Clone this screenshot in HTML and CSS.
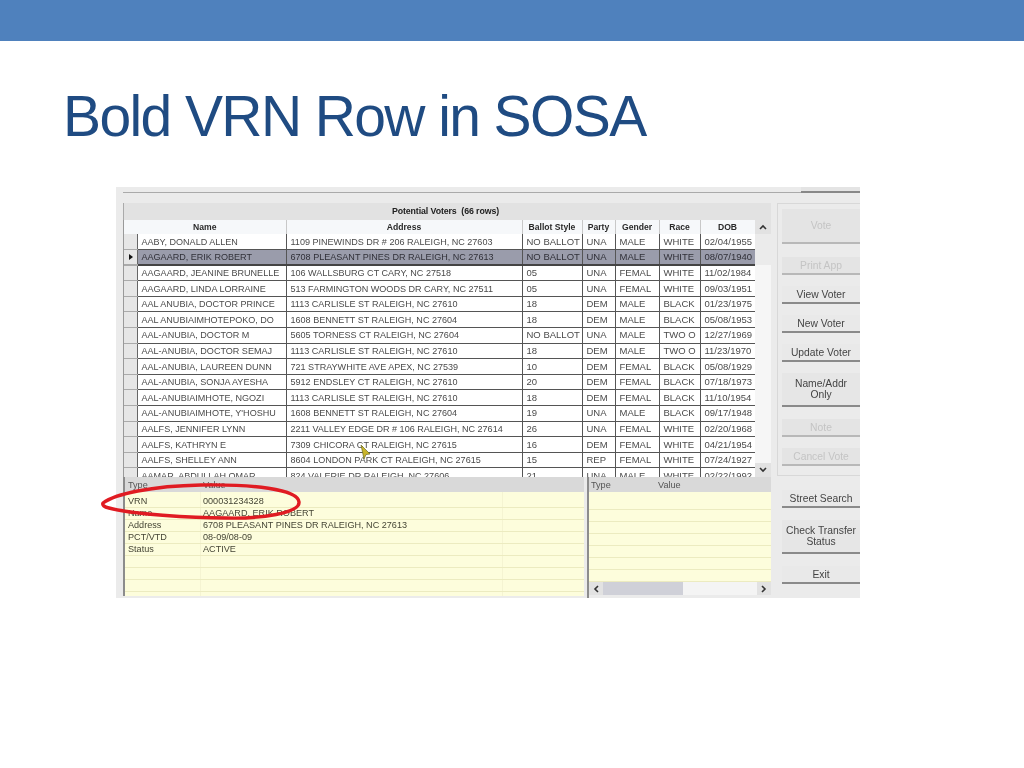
FILE: index.html
```html
<!DOCTYPE html>
<html lang="en">
<head>
<meta charset="utf-8">
<title>Bold VRN Row in SOSA</title>
<link rel="stylesheet" href="styles.css">
</head>
<body>
<div class="topbar"></div>
<h1 class="title">Bold VRN Row in SOSA</h1>
<div class="stage">
  <div class="shot">
    <div class="tabstrip"><span class="tabbtn"></span></div>
    <div class="app">
      <div class="main">
        <div class="gridtitle">Potential Voters &nbsp;(66 rows)</div>
        <div class="gridwrap">
          <div class="tablebox">
            <table class="voters">
              <colgroup><col class="c0"><col class="c1"><col class="c2"><col class="c3"><col class="c4"><col class="c5"><col class="c6"><col class="c7"></colgroup>
              <thead><tr><th colspan="2">Name</th><th>Address</th><th>Ballot Style</th><th>Party</th><th>Gender</th><th>Race</th><th>DOB</th></tr></thead>
              <tbody>
                <tr><td class="rh"></td><td>AABY, DONALD ALLEN</td><td>1109 PINEWINDS DR # 206 RALEIGH, NC 27603</td><td>NO BALLOT</td><td>UNA</td><td>MALE</td><td>WHITE</td><td>02/04/1955</td></tr>
                <tr class="sel"><td class="rh"><span class="arrow"></span></td><td>AAGAARD, ERIK ROBERT</td><td>6708 PLEASANT PINES DR RALEIGH, NC 27613</td><td>NO BALLOT</td><td>UNA</td><td>MALE</td><td>WHITE</td><td>08/07/1940</td></tr>
                <tr><td class="rh"></td><td>AAGAARD, JEANINE BRUNELLE</td><td>106 WALLSBURG CT CARY, NC 27518</td><td>05</td><td>UNA</td><td>FEMAL</td><td>WHITE</td><td>11/02/1984</td></tr>
                <tr><td class="rh"></td><td>AAGAARD, LINDA LORRAINE</td><td>513 FARMINGTON WOODS DR CARY, NC 27511</td><td>05</td><td>UNA</td><td>FEMAL</td><td>WHITE</td><td>09/03/1951</td></tr>
                <tr><td class="rh"></td><td>AAL ANUBIA, DOCTOR PRINCE</td><td>1113 CARLISLE ST RALEIGH, NC 27610</td><td>18</td><td>DEM</td><td>MALE</td><td>BLACK</td><td>01/23/1975</td></tr>
                <tr><td class="rh"></td><td>AAL ANUBIAIMHOTEPOKO, DO</td><td>1608 BENNETT ST RALEIGH, NC 27604</td><td>18</td><td>DEM</td><td>MALE</td><td>BLACK</td><td>05/08/1953</td></tr>
                <tr><td class="rh"></td><td>AAL-ANUBIA, DOCTOR M</td><td>5605 TORNESS CT RALEIGH, NC 27604</td><td>NO BALLOT</td><td>UNA</td><td>MALE</td><td>TWO O</td><td>12/27/1969</td></tr>
                <tr><td class="rh"></td><td>AAL-ANUBIA, DOCTOR SEMAJ</td><td>1113 CARLISLE ST RALEIGH, NC 27610</td><td>18</td><td>DEM</td><td>MALE</td><td>TWO O</td><td>11/23/1970</td></tr>
                <tr><td class="rh"></td><td>AAL-ANUBIA, LAUREEN DUNN</td><td>721 STRAYWHITE AVE APEX, NC 27539</td><td>10</td><td>DEM</td><td>FEMAL</td><td>BLACK</td><td>05/08/1929</td></tr>
                <tr><td class="rh"></td><td>AAL-ANUBIA, SONJA AYESHA</td><td>5912 ENDSLEY CT RALEIGH, NC 27610</td><td>20</td><td>DEM</td><td>FEMAL</td><td>BLACK</td><td>07/18/1973</td></tr>
                <tr><td class="rh"></td><td>AAL-ANUBIAIMHOTE, NGOZI</td><td>1113 CARLISLE ST RALEIGH, NC 27610</td><td>18</td><td>DEM</td><td>FEMAL</td><td>BLACK</td><td>11/10/1954</td></tr>
                <tr><td class="rh"></td><td>AAL-ANUBIAIMHOTE, Y'HOSHU</td><td>1608 BENNETT ST RALEIGH, NC 27604</td><td>19</td><td>UNA</td><td>MALE</td><td>BLACK</td><td>09/17/1948</td></tr>
                <tr><td class="rh"></td><td>AALFS, JENNIFER LYNN</td><td>2211 VALLEY EDGE DR # 106 RALEIGH, NC 27614</td><td>26</td><td>UNA</td><td>FEMAL</td><td>WHITE</td><td>02/20/1968</td></tr>
                <tr><td class="rh"></td><td>AALFS, KATHRYN E</td><td>7309 CHICORA CT RALEIGH, NC 27615</td><td>16</td><td>DEM</td><td>FEMAL</td><td>WHITE</td><td>04/21/1954</td></tr>
                <tr><td class="rh"></td><td>AALFS, SHELLEY ANN</td><td>8604 LONDON PARK CT RALEIGH, NC 27615</td><td>15</td><td>REP</td><td>FEMAL</td><td>WHITE</td><td>07/24/1927</td></tr>
                <tr><td class="rh"></td><td>AAMAR, ABDULLAH OMAR</td><td>824 VALERIE DR RALEIGH, NC 27606</td><td>21</td><td>UNA</td><td>MALE</td><td>WHITE</td><td>02/22/1992</td></tr>
              </tbody>
            </table>
          </div>
          <div class="vscroll">
            <span class="sbtn"><svg width="8" height="6" viewBox="0 0 8 6" aria-hidden="true"><path d="M1 5l3-3 3 3" fill="none" stroke="#333" stroke-width="1.6"/></svg></span>
            <span class="thumb"></span>
            <span class="track"></span>
            <span class="sbtn"><svg width="8" height="6" viewBox="0 0 8 6" aria-hidden="true"><path d="M1 1l3 3 3-3" fill="none" stroke="#333" stroke-width="1.6"/></svg></span>
          </div>
        </div>
        <div class="details">
          <div class="detail left">
            <div class="dhead"><span class="dtype">Type</span><span>Value</span></div>
            <div class="drow"><span class="dtype">VRN</span><span>000031234328</span></div>
            <div class="drow"><span class="dtype">Name</span><span>AAGAARD, ERIK ROBERT</span></div>
            <div class="drow"><span class="dtype">Address</span><span>6708 PLEASANT PINES DR RALEIGH, NC 27613</span></div>
            <div class="drow"><span class="dtype">PCT/VTD</span><span>08-09/08-09</span></div>
            <div class="drow"><span class="dtype">Status</span><span>ACTIVE</span></div>
            <div class="drow"></div><div class="drow"></div><div class="drow"></div>
          </div>
          <div class="detail right">
            <div class="dhead"><span class="dtype short">Type</span><span>Value</span></div>
            <div class="drow"></div><div class="drow"></div><div class="drow"></div><div class="drow"></div><div class="drow"></div><div class="drow"></div><div class="drow"></div>
            <div class="hscroll">
              <span class="sbtn"><svg width="6" height="8" viewBox="0 0 6 8" aria-hidden="true"><path d="M5 1L2 4l3 3" fill="none" stroke="#333" stroke-width="1.6"/></svg></span>
              <span class="hthumb"></span><span class="htrack"></span>
              <span class="sbtn"><svg width="6" height="8" viewBox="0 0 6 8" aria-hidden="true"><path d="M1 1l3 3-3 3" fill="none" stroke="#333" stroke-width="1.6"/></svg></span>
            </div>
          </div>
        </div>
      </div>
      <div class="buttons">
        <div class="group">
          <div class="btn off b-vote">Vote</div>
          <div class="btn off b-print">Print App</div>
          <div class="btn">View Voter</div>
          <div class="btn">New Voter</div>
          <div class="btn">Update Voter</div>
          <div class="btn tall">Name/Addr<br>Only</div>
          <div class="btn off">Note</div>
          <div class="btn off">Cancel Vote</div>
        </div>
        <div class="lower">
          <div class="btn b-street">Street Search</div>
          <div class="btn tall">Check Transfer<br>Status</div>
          <div class="btn">Exit</div>
        </div>
      </div>
    </div>
    <svg class="cursor" width="14" height="16" viewBox="0 0 14 16" aria-hidden="true"><path d="M2 1l9 9-4 .5L5 15z" fill="#c9b52a" stroke="#6b6a20" stroke-width=".7"/></svg>
  </div>
  <svg class="ring" width="204" height="40" viewBox="0 0 204 40" aria-hidden="true"><path d="M2 20C14 11 50 3 100 2c50-1 97 4 98 17 1 11-38 17-73 16-35 0-95-4-117-10-5-1-7-3-6-5z" fill="none" stroke="#e01b22" stroke-width="3.4"/></svg>
</div>
</body>
</html>
```
FILE: styles.css
```css
* { box-sizing: border-box; }
html, body { margin: 0; padding: 0; }
body { width: 1024px; height: 768px; overflow: hidden; background: #fff; font-family: "Liberation Sans", Arial, sans-serif; }
.topbar { height: 41px; background: #4f81bd; }
.title { margin: 42px 0 0 63px; height: 66px; font-size: 57px; line-height: 66px; font-weight: 400; letter-spacing: -1.6px; color: #1f4b82; white-space: nowrap; }
.stage { position: relative; margin: 38px 0 0 116px; width: 744px; height: 411px; }
.shot { position: relative; width: 744px; height: 411px; overflow: hidden; background: #ebebeb; color: #4a4a4a; font-size: 9.5px; filter: blur(.45px); }
.tabstrip { height: 6px; margin-left: 7px; border-bottom: 1px solid #aaa; position: relative; }
.tabbtn { position: absolute; right: 0; top: 0; width: 59px; height: 6px; background: #e4e4e4; border-bottom: 2px solid #888; }
.app { display: flex; padding: 10px 0 0 7px; }
.main { width: 648px; flex: none; }
.gridtitle { height: 17px; line-height: 17px; text-align: center; font-weight: 700; font-size: 8.8px; color: #222; background: #e2e2e2; border-left: 1px solid #aaa; padding-right: 4px; letter-spacing: -.1px; }
.gridwrap { display: flex; height: 257px; overflow: hidden; border-left: 1px solid #999; }
.tablebox { width: 631px; flex: none; height: 257px; overflow: hidden; background: #fff; }
.voters { table-layout: fixed; width: 631px; border-collapse: collapse; }
.c0 { width: 13px; } .c1 { width: 149px; } .c2 { width: 236px; } .c3 { width: 60px; } .c4 { width: 33px; } .c5 { width: 44px; } .c6 { width: 41px; } .c7 { width: 55px; }
.voters th { height: 14px; padding: 0; font-size: 8.6px; font-weight: 700; color: #2a2a2a; background: #f6f8fa; border-right: 1px solid #c8c8c8; text-align: center; white-space: nowrap; }
.voters td { height: 15.6px; padding: 0 0 0 4px; white-space: nowrap; overflow: hidden; border: 1px solid #555; border-width: 0 1px 1px 0; line-height: 14px; }
.voters td:nth-child(2), .voters td:nth-child(3) { font-size: 9.05px; }
.voters td.rh { padding: 0; background: #e6e6e6; border-color: #666; position: relative; border-bottom-color: #aaa; }
.sel td { background: #9a9cab; color: #303038; border-top: 1px solid #444; border-bottom: 2px solid #444; }
.voters .sel td.rh { background: #e6e6e6; }
.arrow { position: absolute; left: 5px; top: 4px; border-left: 4px solid #111; border-top: 3px solid transparent; border-bottom: 3px solid transparent; }
.vscroll { width: 16px; flex: none; display: flex; flex-direction: column; background: #f4f4f4; }
.sbtn { display: flex; align-items: center; justify-content: center; flex: none; width: 16px; height: 14px; background: #e2e2e2; }
.thumb { height: 31px; background: #ebebeb; flex: none; }
.track { flex: 1; background: #f6f6f6; }
.details { display: flex; gap: 3px; height: 121px; }
.detail { height: 119px; background-color: #fdfddc; border-left: 2px solid #8c8c8c; overflow: hidden; font-size: 9.1px; color: #454535; background-repeat: no-repeat; }
.detail.left { width: 461px; background-image: linear-gradient(#f5f4d2, #f5f4d2), linear-gradient(#f5f4d2, #f5f4d2); background-size: 1px 100%, 1px 100%; background-position: 75px 0, 377px 0; }
.detail.right { width: 184px; height: 121px; background-color: #ebebeb; }
.dhead { height: 15px; background: #d9d9d9; display: flex; align-items: center; color: #555; }
.drow { height: 12px; line-height: 11px; display: flex; border-bottom: 1px solid #ecebc0; }
.dhead + .drow { margin-top: 4px; }
.right .drow { background: #fdfddc; }
.right .dhead + .drow { margin-top: 0; height: 18px; }
.dtype { width: 78px; padding-left: 3px; flex: none; }
.short { width: 69px; padding-left: 2px; }
.hscroll { display: flex; height: 13px; background: #f4f4f4; }
.hscroll .sbtn { width: 14px; height: 13px; }
.hthumb { width: 80px; background: #cfd0d8; flex: none; }
.htrack { flex: 1; }
.buttons { margin-left: 6px; width: 83px; flex: none; display: flex; flex-direction: column; font-size: 10.3px; color: #444; }
.group { height: 273px; border: 1px solid #d8d8d8; border-right: 0; padding: 5px 0 0 4px; display: flex; flex-direction: column; gap: 11px; }
.lower { padding-left: 5px; margin-top: 14px; display: flex; flex-direction: column; gap: 11px; }
.btn { height: 18px; flex: none; display: flex; align-items: center; justify-content: center; text-align: center; background: #e9e9e9; border-bottom: 2px solid #8a8a8a; line-height: 11px; white-space: nowrap; }
.tall { height: 34px; background: #e6e6e6; margin-bottom: 1px; }
.off { color: #c4c4c4; border-bottom-color: #b8b8b8; background: #e4e4e4; }
.b-vote { height: 35px; margin-bottom: 2px; }
.b-street { margin-bottom: 1px; }
.cursor { position: absolute; left: 243px; top: 257px; }
.ring { position: absolute; left: -15px; top: 296px; }
```
